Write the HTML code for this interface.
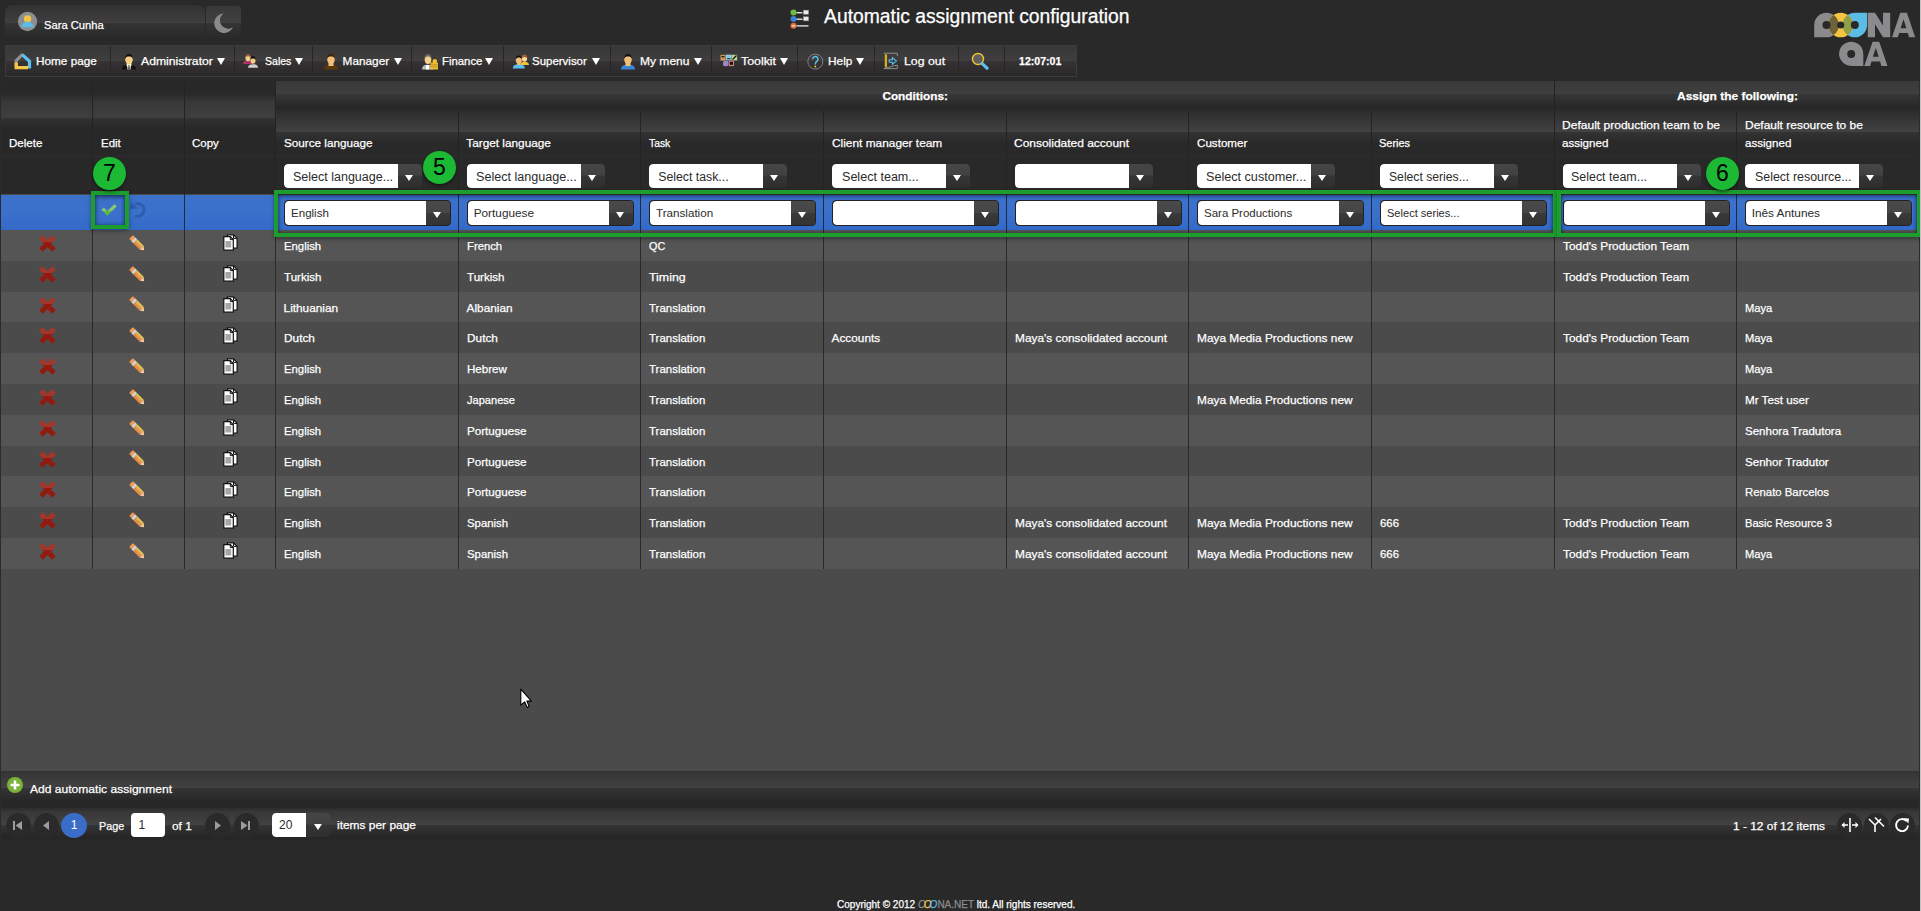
<!DOCTYPE html>
<html><head><meta charset="utf-8"><style>
*{box-sizing:border-box;margin:0;padding:0}
html,body{width:1921px;height:911px;overflow:hidden;background:#292929;font-family:"Liberation Sans",sans-serif;font-size:12px;color:#fff}
.a{position:absolute}
svg{display:block}
.t{position:absolute;white-space:nowrap;line-height:16px;height:16px;-webkit-text-stroke:0.25px currentColor}
#user{left:5px;top:5px;width:200px;height:35px;border-radius:7px;background:linear-gradient(#333232 0,#3f3d3d 17px,#403e3e 17.5px,#353434 18px,#2b2a2a 32px,#292828 35px)}
#moon{left:206px;top:6px;width:35px;height:34px;border-radius:3px;background:linear-gradient(#393838 0,#424141 17px,#343333 17.6px,#2b2a2a 32px,#292828 34px)}
#menu{left:5px;top:45px;width:1072px;height:32px;border:1px solid #3d3c3c;background:linear-gradient(#383737 0,#3f3d3d 14.5px,#353333 15px,#2d2b2b 26px,#2a2828 30px)}
.sep{position:absolute;top:46px;width:1px;height:30px;background:#272626}
.arr{position:absolute;width:0;height:0;border-left:4.5px solid transparent;border-right:4.5px solid transparent;border-top:7px solid #fff}
#grid{left:0;top:81px;width:1920px;height:761px;background:#4b4b4b;border-left:1px solid #2b2b2b;border-right:1px solid #2b2b2b}
.vl{position:absolute;width:1px;background:#2a2a2a}
.dd{position:absolute;height:24px;border-radius:4px;overflow:hidden}
.dd .w{position:absolute;left:0;top:0;bottom:0;background:#fff;border-radius:4px 0 0 4px;color:#2a2a2a;padding-left:10px;line-height:24px;font-size:12px;white-space:nowrap}
.dd .b{position:absolute;right:0;top:0;bottom:0;width:24px;background:linear-gradient(#474646 0,#424141 11px,#363535 12px,#2f2e2e 24px);border-radius:0 4px 4px 0}
.dd .b i{position:absolute;left:7.5px;top:11px;width:0;height:0;border-left:4.5px solid transparent;border-right:4.5px solid transparent;border-top:6.5px solid #fff}
.ed{position:absolute;height:26px;border:1px solid #232222;border-radius:4px;background:#343333;overflow:hidden}
.ed .w{position:absolute;left:0;top:0;bottom:0;background:#fff;border-radius:4px 0 0 4px;color:#2a2a2a;padding-left:7px;line-height:24px;font-size:12px;white-space:nowrap}
.ed .b{position:absolute;right:0;top:0;bottom:0;width:24px;background:linear-gradient(#4b4a4a 0,#464545 11.5px,#3b3a3a 12px,#343333 24px)}
.ed .b i{position:absolute;left:7.5px;top:11px;width:0;height:0;border-left:4.5px solid transparent;border-right:4.5px solid transparent;border-top:6.5px solid #fff}
.circ{position:absolute;width:33px;height:33px;border-radius:50%;background:#1bb934;color:#000;font-size:23px;text-align:center;line-height:33px;box-shadow:0 2px 3px rgba(0,0,0,.45)}
.gr{position:absolute;border:4px solid #1c9e2e;box-shadow:inset 0 2px 4px rgba(0,0,0,.45),inset 0 0 4px rgba(0,0,0,.3),0 2px 4px rgba(0,0,0,.35)}
.row{position:absolute;left:1px;width:1918px}
.cell{position:absolute;white-space:nowrap;color:#fff;font-size:12px}
.pb{position:absolute;width:25px;height:25px;border-radius:50%;background:#2b2a2a}
</style></head><body>
<div id="user" class="a"></div>
<svg class="a" style="left:17px;top:11px" width="21" height="21" viewBox="0 0 21 21"><circle cx="10.5" cy="10.5" r="9.65" fill="#8d8e91"/><circle cx="10.6" cy="7.9" r="3.65" fill="#f6c445"/><path d="M4.6 16.3c0-3.5 2.5-5.5 5.9-5.5s5.9 2 5.9 5.5z" fill="#5bbde6"/></svg>
<div id="tx1" class="t" style="left:43.70px;top:16.91px;font-size:11.800px;color:#fff;transform:scaleX(0.9487);transform-origin:0 0;">Sara Cunha</div>
<div id="moon" class="a"></div>
<svg class="a" style="left:212px;top:12px" width="22" height="22" viewBox="0 0 22 22"><path d="M11.5 1.5A9.8 9.8 0 1 0 21 15.2 8 8 0 0 1 11.5 1.5z" fill="#8a8a8d"/></svg>
<svg class="a" style="left:790px;top:9px" width="21" height="21" viewBox="0 0 21 21">
<circle cx="3.5" cy="3.5" r="3" fill="#6cbb3c"/><rect x="6.5" y="3" width="6" height="1.4" fill="#ddd"/><rect x="13.5" y="1.2" width="5" height="4" fill="#eee" stroke="#999" stroke-width=".6"/>
<circle cx="3.5" cy="10" r="3" fill="#3b7fd9"/><rect x="6.5" y="9.5" width="6" height="1.4" fill="#ddd"/><rect x="13.5" y="7.8" width="5" height="4" fill="#eee" stroke="#999" stroke-width=".6"/>
<circle cx="3.5" cy="16.8" r="3" fill="#e0703a"/><rect x="1.8" y="16.3" width="3.4" height="1" fill="#fff"/><rect x="6.5" y="16.2" width="12" height="1.4" fill="#ddd"/></svg>
<div id="tx2" class="t" style="left:824.10px;top:8.71px;font-size:19.300px;color:#fff;">Automatic assignment configuration</div>
<svg class="a" style="left:1814px;top:12px" width="104" height="56" viewBox="0 0 104 56">
<defs>
<clipPath id="cy"><circle cx="26.7" cy="13" r="12.3"/></clipPath>
</defs>
<g fill="#8b8b8e">
<path d="M12.5 0.7A12.3 12.3 0 0 1 24.8 13 12.3 12.3 0 0 1 12.5 25.3H0.2V13A12.3 12.3 0 0 1 12.5 0.7z"/>
<path d="M53.8 25.3V0.7H61L69 13.5V0.7H76.2V25.3H69L61 12.3V25.3z"/>
<path fill-rule="evenodd" d="M78 25.3L86.3 0.7H92.9L101.2 25.3H95.1L93.8 21H85.2L83.8 25.3zM86.6 16.2H92.4L89.5 7.2z"/>
<path d="M37.2 29.7A12.1 12.1 0 0 1 49.3 41.8V53.9H37.2A12.1 12.1 0 0 1 37.2 29.7z"/>
<path fill-rule="evenodd" d="M50.3 53.9L58.6 29.7H65.2L73.5 53.9H67.4L66.1 49.6H57.5L56.1 53.9zM58.9 44.8H64.7L61.8 36z"/>
</g>
<path d="M40.8 0.7H53.1V13A12.3 12.3 0 0 1 40.8 25.3 12.3 12.3 0 0 1 28.5 13 12.3 12.3 0 0 1 40.8 0.7z" fill="#5bbde6"/>
<circle cx="26.7" cy="13" r="12.3" fill="#f4c542"/>
<g clip-path="url(#cy)">
<path d="M12.5 0.7A12.3 12.3 0 0 1 24.8 13 12.3 12.3 0 0 1 12.5 25.3H0.2V13A12.3 12.3 0 0 1 12.5 0.7z" fill="#6f6238"/>
<path d="M40.8 0.7H53.1V13A12.3 12.3 0 0 1 40.8 25.3 12.3 12.3 0 0 1 28.5 13 12.3 12.3 0 0 1 40.8 0.7z" fill="#8fa049"/>
</g>
<g fill="#292929"><circle cx="12.5" cy="13" r="4"/><circle cx="26.7" cy="13" r="3.6"/><circle cx="40.8" cy="13" r="4"/><circle cx="37.2" cy="41.9" r="4"/></g>
</svg>
<div id="menu" class="a"></div>
<div class="sep" style="left:110px"></div>
<div class="sep" style="left:234px"></div>
<div class="sep" style="left:312px"></div>
<div class="sep" style="left:411px"></div>
<div class="sep" style="left:503px"></div>
<div class="sep" style="left:610px"></div>
<div class="sep" style="left:711px"></div>
<div class="sep" style="left:797px"></div>
<div class="sep" style="left:874px"></div>
<div class="sep" style="left:958px"></div>
<div class="sep" style="left:1004px"></div>
<div id="tx3" class="t" style="left:35.90px;top:52.91px;font-size:11.800px;color:#fff;">Home page</div>
<div id="tx4" class="t" style="left:140.60px;top:52.91px;font-size:11.800px;color:#fff;transform:scaleX(1.0347);transform-origin:0 0;">Administrator</div>
<div class="arr" style="left:216.7px;top:58px"></div>
<div id="tx5" class="t" style="left:264.50px;top:52.91px;font-size:11.800px;color:#fff;transform:scaleX(0.8927);transform-origin:0 0;">Sales</div>
<div class="arr" style="left:294.5px;top:58px"></div>
<div id="tx6" class="t" style="left:342.60px;top:52.91px;font-size:11.800px;color:#fff;">Manager</div>
<div class="arr" style="left:393.5px;top:58px"></div>
<div id="tx7" class="t" style="left:441.50px;top:52.91px;font-size:11.800px;color:#fff;transform:scaleX(0.9634);transform-origin:0 0;">Finance</div>
<div class="arr" style="left:485px;top:58px"></div>
<div id="tx8" class="t" style="left:532.40px;top:52.91px;font-size:11.800px;color:#fff;transform:scaleX(0.9722);transform-origin:0 0;">Supervisor</div>
<div class="arr" style="left:592px;top:58px"></div>
<div id="tx9" class="t" style="left:640.10px;top:52.91px;font-size:11.800px;color:#fff;transform:scaleX(1.0190);transform-origin:0 0;">My menu</div>
<div class="arr" style="left:694px;top:58px"></div>
<div id="tx10" class="t" style="left:741.10px;top:52.91px;font-size:11.800px;color:#fff;transform:scaleX(1.0485);transform-origin:0 0;">Toolkit</div>
<div class="arr" style="left:780px;top:58px"></div>
<div id="tx11" class="t" style="left:828.10px;top:52.91px;font-size:11.800px;color:#fff;">Help</div>
<div class="arr" style="left:856px;top:58px"></div>
<div id="tx12" class="t" style="left:903.80px;top:52.91px;font-size:11.800px;color:#fff;transform:scaleX(1.0428);transform-origin:0 0;">Log out</div>
<div id="tx13" class="t" style="left:1018.80px;top:52.91px;font-size:11.800px;color:#fff;transform:scaleX(0.8963);transform-origin:0 0;font-weight:bold;">12:07:01</div>
<svg class="a" style="left:14px;top:52px" width="18" height="18" viewBox="0 0 18 18"><path d="M2.2 15.6V8.6L8.8 2.2" fill="none" stroke="#8e9096" stroke-width="3.2"/><path d="M8.2 2.6l7.3 6.6v7.4" fill="none" stroke="#5bc3ef" stroke-width="3.2"/><path d="M2.2 10.5v5.2H14" fill="none" stroke="#f6c744" stroke-width="3.2"/></svg>
<svg class="a" style="left:121px;top:53px" width="16" height="17" viewBox="0 0 16 17"><path d="M1 16.5c0-3.6 2.8-5 7-5s7 1.4 7 5z" fill="#111"/><rect x="5.5" y="9" width="5" height="4" fill="#f4cf86"/><ellipse cx="8" cy="6.5" rx="3.8" ry="4.6" fill="#f4cf86"/><path d="M4 5.8C4 2.5 5.8 1 8 1s4 1.5 4 4.8c-.8-1.6-2-2.2-4-2.2S4.8 4.2 4 5.8z" fill="#111"/><path d="M6 11.5h4l-.5 5h-3z" fill="#fff"/><path d="M7.6 12h.8l.4 4.5h-1.6z" fill="#222"/></svg>
<svg class="a" style="left:243px;top:54px" width="18" height="14" viewBox="0 0 18 14"><path d="M0 10c0-2.6 2-3.6 5-3.6s5 1 5 3.6z" fill="#b0306a"/><ellipse cx="5" cy="4" rx="2.6" ry="3.2" fill="#f2cd86"/><path d="M2.2 4.5C2.2 1.5 3.5 0 5 0s2.8 1.5 2.8 4.5C7.2 2.8 6.2 2.2 5 2.2S2.8 2.8 2.2 4.5z" fill="#a45a36"/><path d="M5 13.8c0-2.6 2-3.6 5-3.6s5 1 5 3.6z" fill="#cfcfcf"/><ellipse cx="10" cy="6.5" rx="2.5" ry="3.3" fill="#f2cd86"/><path d="M7.5 6C7.5 3.5 8.7 2 10 2s2.5 1.5 2.5 4c-.6-1.2-1.5-1.6-2.5-1.6S8.1 4.8 7.5 6z" fill="#111"/></svg>
<svg class="a" style="left:323px;top:53px" width="16" height="17" viewBox="0 0 16 17"><path d="M1 16.5c0-3.6 2.8-5 7-5s7 1.4 7 5z" fill="#5a3a0a"/><rect x="5.5" y="9" width="5" height="4" fill="#f1bf78"/><ellipse cx="8" cy="6.5" rx="3.8" ry="4.6" fill="#f1bf78"/><path d="M4 5.8C4 2.5 5.8 1 8 1s4 1.5 4 4.8c-.8-1.6-2-2.2-4-2.2S4.8 4.2 4 5.8z" fill="#3b2508"/></svg>
<svg class="a" style="left:421px;top:53px" width="18" height="17" viewBox="0 0 18 17"><path d="M1 16.5c0-3.4 2.2-4.8 5.5-4.8s5.5 1.4 5.5 4.8z" fill="#bbb"/><path d="M5 12h3v4.5H5z" fill="#fff"/><ellipse cx="7" cy="6.5" rx="3.3" ry="4.5" fill="#f5d088"/><path d="M3.6 5.5C3.6 2.5 5 1 7 1s3.4 1.5 3.4 4.5C9.6 4 8.5 3.4 7 3.4S4.4 4 3.6 5.5z" fill="#6d6a60"/><rect x="9.5" y="9.5" width="7.5" height="7" fill="#e9bb34"/><g fill="#b98a1a"><rect x="9.5" y="11.5" width="7.5" height=".7"/><rect x="9.5" y="13.5" width="7.5" height=".7"/></g><circle cx="13.8" cy="8.2" r="2.2" fill="#f2c232"/></svg>
<svg class="a" style="left:512px;top:54px" width="18" height="15" viewBox="0 0 18 15"><path d="M8 11c0-2.4 2-3.3 4.5-3.3S17 8.6 17 11z" fill="#f2c232"/><ellipse cx="12.5" cy="4.5" rx="2.6" ry="3.3" fill="#f7d99a"/><path d="M9.6 5.5C9.6 1.8 11 .6 12.5.6s3 1.2 3 4.9c-.8-1.6-1.7-2.4-3-2.4s-2.2.8-2.9 2.4z" fill="#a45a36"/><path d="M.8 14.5c0-3 2.6-4.3 6-4.3s6 1.3 6 4.3z" fill="#5ac0ef"/><rect x="5.2" y="8" width="3.2" height="3" fill="#f2bf78"/><ellipse cx="6.8" cy="6" rx="3" ry="3.8" fill="#f2bf78"/><path d="M3.8 5.2C3.8 2.6 5.2 1.6 6.8 1.6s3 1 3 3.6C9 4 8 3.5 6.8 3.5S4.6 4 3.8 5.2z" fill="#111"/></svg>
<svg class="a" style="left:620px;top:53px" width="16" height="17" viewBox="0 0 16 17"><path d="M1 16.5c0-3.6 2.8-5 7-5s7 1.4 7 5z" fill="#3a86d4"/><rect x="5.5" y="9" width="5" height="4" fill="#f2bf78"/><ellipse cx="8" cy="6.5" rx="3.8" ry="4.6" fill="#f2bf78"/><path d="M4 5.8C4 2.5 5.8 1 8 1s4 1.5 4 4.8c-.8-1.6-2-2.2-4-2.2S4.8 4.2 4 5.8z" fill="#111"/></svg>
<svg class="a" style="left:720px;top:54px" width="18" height="13" viewBox="0 0 18 13"><rect x=".5" y=".8" width="5.2" height="5.8" fill="#c99a5e"/><rect x="6" y=".6" width="5.4" height="5.8" fill="#8cc9e2"/><rect x="11.5" y=".8" width="5.6" height="5.6" fill="#bfd88e"/><path d="M12.5 5.5l4-4" stroke="#111" stroke-width="1.2"/><rect x="3" y="6.8" width="5.5" height="5.5" rx="2" fill="#9a88c8"/><rect x="8.8" y="6.8" width="5.2" height="5.3" fill="#d88080"/><rect x="9.8" y="7.8" width="3.2" height="3" fill="#111"/><rect x="1.5" y="2" width="3" height="1.4" fill="#222"/><rect x="7" y="4.2" width="3.5" height="1" fill="#222"/></svg>
<svg class="a" style="left:807px;top:53px" width="18" height="18" viewBox="0 0 18 18"><circle cx="8.3" cy="8.6" r="7.5" fill="none" stroke="#8a8a8a" stroke-width=".9"/><path d="M5.6 6.2a2.7 2.7 0 1 1 4.2 2.2c-1.2.8-1.5 1.4-1.5 3" fill="none" stroke="#5ac0ef" stroke-width="1.5"/><circle cx="8.3" cy="13.6" r="1" fill="#f2c232"/></svg>
<svg class="a" style="left:883px;top:52px" width="18" height="18" viewBox="0 0 18 18"><path d="M.8 1.2h13.5V4M14.3 13v3.6H.8z" fill="none" stroke="#999" stroke-width=".9"/><rect x="1.8" y="2" width="2.2" height="13.6" rx="1" fill="#e8b630" stroke="#8a6a10" stroke-width=".4"/><path d="M6.2 7.8h3.2V5.6l4 3.4-4 3.4V10.2H6.2z" fill="none" stroke="#5ac0ef" stroke-width="1.1"/></svg>
<svg class="a" style="left:971px;top:52px" width="19" height="18" viewBox="0 0 19 18"><circle cx="7" cy="7" r="5.5" fill="#5f5f5f" stroke="#f2c232" stroke-width="1.4"/><path d="M11.2 11.6l4.8 4.6" stroke="#5ac0ef" stroke-width="3.2" stroke-linecap="round"/></svg>
<div id="grid" class="a"></div>
<div class="a" style="left:1px;top:81px;width:274px;height:113px;background:linear-gradient(#292828 0,#2a2929 13px,#393838 21px,#403f3f 36.5px,#333232 37px,#292828 48px,#292828 113px)"></div>
<div class="a" style="left:275px;top:81px;width:1644px;height:28px;background:linear-gradient(#3a3939 0,#403f3f 13px,#373636 13.5px,#282727 26.5px,#2b2a29 28px)"></div>
<div class="a" style="left:275px;top:109px;width:1644px;height:85px;background:linear-gradient(#2b2a2a 0,#434242 23px,#343333 23.5px,#2a2929 34px,#2a2929 85px)"></div>
<div class="a" style="left:1px;top:156px;width:1918px;height:1px;background:#2e2d2d"></div>
<div class="vl" style="left:92px;top:81px;height:113px;background:#242323"></div>
<div class="vl" style="left:184px;top:81px;height:113px;background:#242323"></div>
<div class="vl" style="left:275px;top:81px;height:113px;background:#242323"></div>
<div class="vl" style="left:458px;top:110px;height:84px;background:#242323"></div>
<div class="vl" style="left:640px;top:110px;height:84px;background:#242323"></div>
<div class="vl" style="left:823px;top:110px;height:84px;background:#242323"></div>
<div class="vl" style="left:1006px;top:110px;height:84px;background:#242323"></div>
<div class="vl" style="left:1188px;top:110px;height:84px;background:#242323"></div>
<div class="vl" style="left:1371px;top:110px;height:84px;background:#242323"></div>
<div class="vl" style="left:1554px;top:81px;height:113px;background:#242323"></div>
<div class="vl" style="left:1736px;top:110px;height:84px;background:#242323"></div>
<div id="tx14" class="t" style="left:882.40px;top:87.51px;font-size:11.800px;color:#fff;font-weight:bold;">Conditions:</div>
<div id="tx15" class="t" style="left:1677.00px;top:87.51px;font-size:11.800px;color:#fff;transform:scaleX(1.0140);transform-origin:0 0;font-weight:bold;">Assign the following:</div>
<div id="tx16" class="t" style="left:8.84px;top:134.91px;font-size:11.800px;color:#fff;transform:scaleX(0.9787);transform-origin:0 0;">Delete</div>
<div id="tx17" class="t" style="left:100.70px;top:134.91px;font-size:11.800px;color:#fff;transform:scaleX(0.9699);transform-origin:0 0;">Edit</div>
<div id="tx18" class="t" style="left:191.85px;top:134.91px;font-size:11.800px;color:#fff;transform:scaleX(0.9739);transform-origin:0 0;">Copy</div>
<div id="tx19" class="t" style="left:283.50px;top:134.91px;font-size:11.800px;color:#fff;transform:scaleX(0.9913);transform-origin:0 0;">Source language</div>
<div id="tx20" class="t" style="left:466.30px;top:134.91px;font-size:11.800px;color:#fff;">Target language</div>
<div id="tx21" class="t" style="left:649.00px;top:134.91px;font-size:11.800px;color:#fff;transform:scaleX(0.8741);transform-origin:0 0;">Task</div>
<div id="tx22" class="t" style="left:831.60px;top:134.91px;font-size:11.800px;color:#fff;transform:scaleX(1.0068);transform-origin:0 0;">Client manager team</div>
<div id="tx23" class="t" style="left:1013.60px;top:134.91px;font-size:11.800px;color:#fff;transform:scaleX(1.0142);transform-origin:0 0;">Consolidated account</div>
<div id="tx24" class="t" style="left:1196.90px;top:134.91px;font-size:11.800px;color:#fff;transform:scaleX(0.9846);transform-origin:0 0;">Customer</div>
<div id="tx25" class="t" style="left:1379.00px;top:134.91px;font-size:11.800px;color:#fff;transform:scaleX(0.9297);transform-origin:0 0;">Series</div>
<div id="tx26" class="t" style="left:1562.40px;top:116.51px;font-size:11.800px;color:#fff;transform:scaleX(1.0211);transform-origin:0 0;">Default production team to be</div>
<div id="tx27" class="t" style="left:1562.40px;top:134.51px;font-size:11.800px;color:#fff;transform:scaleX(0.9830);transform-origin:0 0;">assigned</div>
<div id="tx28" class="t" style="left:1745.00px;top:116.81px;font-size:11.800px;color:#fff;transform:scaleX(1.0148);transform-origin:0 0;">Default resource to be</div>
<div id="tx29" class="t" style="left:1745.00px;top:134.71px;font-size:11.800px;color:#fff;transform:scaleX(0.9830);transform-origin:0 0;">assigned</div>
<div class="dd" style="left:283.7px;top:164px;width:138px"><div class="w" style="width:114px"></div><div class="b"><i></i></div></div>
<div id="tx30" class="t" style="left:293.20px;top:168.84px;font-size:12.300px;color:#2b2b2b;-webkit-text-stroke:0;transform:scaleX(1.0165);transform-origin:0 0;">Select language...</div>
<div class="dd" style="left:466.7px;top:164px;width:138px"><div class="w" style="width:114px"></div><div class="b"><i></i></div></div>
<div id="tx31" class="t" style="left:475.50px;top:168.84px;font-size:12.300px;color:#2b2b2b;-webkit-text-stroke:0;transform:scaleX(1.0243);transform-origin:0 0;">Select language...</div>
<div class="dd" style="left:648.7px;top:164px;width:138px"><div class="w" style="width:114px"></div><div class="b"><i></i></div></div>
<div id="tx32" class="t" style="left:658.20px;top:168.84px;font-size:12.300px;color:#2b2b2b;-webkit-text-stroke:0;">Select task...</div>
<div class="dd" style="left:831.7px;top:164px;width:138px"><div class="w" style="width:114px"></div><div class="b"><i></i></div></div>
<div id="tx33" class="t" style="left:841.60px;top:168.84px;font-size:12.300px;color:#2b2b2b;-webkit-text-stroke:0;transform:scaleX(1.0217);transform-origin:0 0;">Select team...</div>
<div class="dd" style="left:1014.7px;top:164px;width:138px"><div class="w" style="width:114px"></div><div class="b"><i></i></div></div>
<div class="dd" style="left:1196.7px;top:164px;width:138px"><div class="w" style="width:114px"></div><div class="b"><i></i></div></div>
<div id="tx34" class="t" style="left:1206.30px;top:168.84px;font-size:12.300px;color:#2b2b2b;-webkit-text-stroke:0;transform:scaleX(1.0259);transform-origin:0 0;">Select customer...</div>
<div class="dd" style="left:1379.7px;top:164px;width:138px"><div class="w" style="width:114px"></div><div class="b"><i></i></div></div>
<div id="tx35" class="t" style="left:1389.40px;top:168.84px;font-size:12.300px;color:#2b2b2b;-webkit-text-stroke:0;transform:scaleX(0.9899);transform-origin:0 0;">Select series...</div>
<div class="dd" style="left:1562.7px;top:164px;width:138px"><div class="w" style="width:114px"></div><div class="b"><i></i></div></div>
<div id="tx36" class="t" style="left:1571.40px;top:168.84px;font-size:12.300px;color:#2b2b2b;-webkit-text-stroke:0;transform:scaleX(1.0117);transform-origin:0 0;">Select team...</div>
<div class="dd" style="left:1744.7px;top:164px;width:138px"><div class="w" style="width:114px"></div><div class="b"><i></i></div></div>
<div id="tx37" class="t" style="left:1754.60px;top:168.84px;font-size:12.300px;color:#2b2b2b;-webkit-text-stroke:0;transform:scaleX(1.0085);transform-origin:0 0;">Select resource...</div>
<div class="a" style="left:1px;top:194.6px;width:1918px;height:35.4px;background:linear-gradient(#3b70cb 0,#3b70cb 17px,#3369c8 35.4px)"></div>
<div class="a" style="left:275px;top:230px;width:1644px;height:3px;background:#555"></div>
<div class="vl" style="left:92px;top:194px;height:36px;background:#1d2a40"></div>
<div class="vl" style="left:184px;top:194px;height:36px;background:#1d2a40"></div>
<div class="vl" style="left:275px;top:194px;height:36px;background:#1d2a40"></div>
<div class="vl" style="left:458px;top:194px;height:36px;background:#1d2a40"></div>
<div class="vl" style="left:640px;top:194px;height:36px;background:#1d2a40"></div>
<div class="vl" style="left:823px;top:194px;height:36px;background:#1d2a40"></div>
<div class="vl" style="left:1006px;top:194px;height:36px;background:#1d2a40"></div>
<div class="vl" style="left:1188px;top:194px;height:36px;background:#1d2a40"></div>
<div class="vl" style="left:1371px;top:194px;height:36px;background:#1d2a40"></div>
<div class="vl" style="left:1554px;top:194px;height:36px;background:#1d2a40"></div>
<div class="vl" style="left:1736px;top:194px;height:36px;background:#1d2a40"></div>
<div class="ed" style="left:283.5px;top:200px;width:167.2px"><div class="w" style="width:141px"></div><div class="b"><i></i></div></div>
<div id="tx38" class="t" style="left:290.70px;top:204.91px;font-size:11.800px;color:#2b2b2b;-webkit-text-stroke:0;transform:scaleX(0.9792);transform-origin:0 0;">English</div>
<div class="ed" style="left:466.5px;top:200px;width:167.2px"><div class="w" style="width:141px"></div><div class="b"><i></i></div></div>
<div id="tx39" class="t" style="left:473.70px;top:204.91px;font-size:11.800px;color:#2b2b2b;-webkit-text-stroke:0;">Portuguese</div>
<div class="ed" style="left:648.5px;top:200px;width:167.2px"><div class="w" style="width:141px"></div><div class="b"><i></i></div></div>
<div id="tx40" class="t" style="left:656.40px;top:204.91px;font-size:11.800px;color:#2b2b2b;-webkit-text-stroke:0;transform:scaleX(0.9868);transform-origin:0 0;">Translation</div>
<div class="ed" style="left:831.5px;top:200px;width:167.2px"><div class="w" style="width:141px"></div><div class="b"><i></i></div></div>
<div class="ed" style="left:1014.5px;top:200px;width:167.2px"><div class="w" style="width:141px"></div><div class="b"><i></i></div></div>
<div class="ed" style="left:1196.5px;top:200px;width:167.2px"><div class="w" style="width:141px"></div><div class="b"><i></i></div></div>
<div id="tx41" class="t" style="left:1204.40px;top:204.91px;font-size:11.800px;color:#2b2b2b;-webkit-text-stroke:0;transform:scaleX(0.9739);transform-origin:0 0;">Sara Productions</div>
<div class="ed" style="left:1379.5px;top:200px;width:167.2px"><div class="w" style="width:141px"></div><div class="b"><i></i></div></div>
<div id="tx42" class="t" style="left:1387.40px;top:204.91px;font-size:11.800px;color:#2b2b2b;-webkit-text-stroke:0;transform:scaleX(0.9372);transform-origin:0 0;">Select series...</div>
<div class="ed" style="left:1562.5px;top:200px;width:167.2px"><div class="w" style="width:141px"></div><div class="b"><i></i></div></div>
<div class="ed" style="left:1744.5px;top:200px;width:167.2px"><div class="w" style="width:141px"></div><div class="b"><i></i></div></div>
<div id="tx43" class="t" style="left:1751.70px;top:204.91px;font-size:11.800px;color:#2b2b2b;-webkit-text-stroke:0;">Inês Antunes</div>
<svg class="a" style="left:99px;top:201px" width="20" height="16" viewBox="0 0 20 16"><defs><linearGradient id="cg" x1="0" y1="0" x2="0" y2="16" gradientUnits="userSpaceOnUse"><stop offset=".62" stop-color="#86c872"/><stop offset=".63" stop-color="#5db83e"/></linearGradient></defs><path d="M3.6 7.6L8.3 12.4 16.6 4.1" fill="none" stroke="url(#cg)" stroke-width="3.4"/></svg>
<svg class="a" style="left:129px;top:200px" width="20" height="20" viewBox="0 0 20 20"><path d="M6.07 4.2A6.35 6.35 0 1 1 6.07 15.7" fill="none" stroke="#2e5cae" stroke-width="2.7"/><path d="M2.1 1.9L1 9.5 8.6 8.2z" fill="#2e5cae"/></svg>
<div class="a" style="left:1px;top:230.0px;width:1918px;height:30.8px;background:#555555"></div>
<div class="a" style="left:38.6px;top:234.9px"><svg width="17" height="17" viewBox="0 0 17 17"><defs><linearGradient id="xg" x1="0" y1="0" x2="0" y2="1"><stop offset=".35" stop-color="#a3352b"/><stop offset=".36" stop-color="#911b10"/></linearGradient></defs><path d="M2 2l13 13M15 2L2 15" stroke="url(#xg)" stroke-width="5.2"/></svg></div>
<div class="a" style="left:129.2px;top:234.8px"><svg width="17" height="17" viewBox="0 0 17 17" style="overflow:visible"><g transform="rotate(45 8.5 8.5)"><rect x="-0.7" y="5.8" width="3.4" height="5.4" rx="1" fill="#f39a52"/><rect x="2.5" y="5.8" width="2.8" height="5.4" fill="#d4d4d4"/><rect x="5.3" y="5.8" width="9.2" height="1.9" fill="#e9c64c"/><rect x="5.3" y="7.7" width="9.2" height="1.7" fill="#f2ac62"/><rect x="5.3" y="9.4" width="9.2" height="1.8" fill="#f28a3c"/><path d="M14.5 5.8L17.9 8.5 14.5 11.2z" fill="#f4c9a2"/></g></svg></div>
<div class="a" style="left:222.5px;top:234.3px"><svg width="15" height="17" viewBox="0 0 15 17"><path d="M4.5.8h6l3.6 3.6v9.6H4.5z" fill="#fff" stroke="#111" stroke-width="1.2"/><path d="M.8 2.6h6.5l3 3v10.6H.8z" fill="#fff" stroke="#111" stroke-width="1.2"/><rect x="2.4" y="7" width="5.8" height="6.5" fill="#a6a6a6"/><path d="M7.3 2.6v3h3" fill="none" stroke="#111" stroke-width="1"/><path d="M10.5.8v3.6h3.6" fill="none" stroke="#111" stroke-width="1"/></svg></div>
<div id="tx44" class="t" style="left:283.60px;top:238.01px;font-size:11.800px;color:#fff;transform:scaleX(0.9592);transform-origin:0 0;">English</div>
<div id="tx45" class="t" style="left:466.60px;top:238.01px;font-size:11.800px;color:#fff;transform:scaleX(0.9572);transform-origin:0 0;">French</div>
<div id="tx46" class="t" style="left:648.60px;top:238.01px;font-size:11.800px;color:#fff;transform:scaleX(0.9133);transform-origin:0 0;">QC</div>
<div id="tx47" class="t" style="left:1562.60px;top:238.01px;font-size:11.800px;color:#fff;transform:scaleX(1.0064);transform-origin:0 0;">Todd's Production Team</div>
<div class="a" style="left:1px;top:260.8px;width:1918px;height:30.8px;background:#4b4b4b"></div>
<div class="a" style="left:38.6px;top:265.7px"><svg width="17" height="17" viewBox="0 0 17 17"><defs><linearGradient id="xg" x1="0" y1="0" x2="0" y2="1"><stop offset=".35" stop-color="#a3352b"/><stop offset=".36" stop-color="#911b10"/></linearGradient></defs><path d="M2 2l13 13M15 2L2 15" stroke="url(#xg)" stroke-width="5.2"/></svg></div>
<div class="a" style="left:129.2px;top:265.6px"><svg width="17" height="17" viewBox="0 0 17 17" style="overflow:visible"><g transform="rotate(45 8.5 8.5)"><rect x="-0.7" y="5.8" width="3.4" height="5.4" rx="1" fill="#f39a52"/><rect x="2.5" y="5.8" width="2.8" height="5.4" fill="#d4d4d4"/><rect x="5.3" y="5.8" width="9.2" height="1.9" fill="#e9c64c"/><rect x="5.3" y="7.7" width="9.2" height="1.7" fill="#f2ac62"/><rect x="5.3" y="9.4" width="9.2" height="1.8" fill="#f28a3c"/><path d="M14.5 5.8L17.9 8.5 14.5 11.2z" fill="#f4c9a2"/></g></svg></div>
<div class="a" style="left:222.5px;top:265.1px"><svg width="15" height="17" viewBox="0 0 15 17"><path d="M4.5.8h6l3.6 3.6v9.6H4.5z" fill="#fff" stroke="#111" stroke-width="1.2"/><path d="M.8 2.6h6.5l3 3v10.6H.8z" fill="#fff" stroke="#111" stroke-width="1.2"/><rect x="2.4" y="7" width="5.8" height="6.5" fill="#a6a6a6"/><path d="M7.3 2.6v3h3" fill="none" stroke="#111" stroke-width="1"/><path d="M10.5.8v3.6h3.6" fill="none" stroke="#111" stroke-width="1"/></svg></div>
<div id="tx48" class="t" style="left:283.60px;top:268.81px;font-size:11.800px;color:#fff;transform:scaleX(0.9798);transform-origin:0 0;">Turkish</div>
<div id="tx49" class="t" style="left:466.60px;top:268.81px;font-size:11.800px;color:#fff;transform:scaleX(0.9798);transform-origin:0 0;">Turkish</div>
<div id="tx50" class="t" style="left:648.60px;top:268.81px;font-size:11.800px;color:#fff;transform:scaleX(1.0489);transform-origin:0 0;">Timing</div>
<div id="tx51" class="t" style="left:1562.60px;top:268.81px;font-size:11.800px;color:#fff;transform:scaleX(1.0064);transform-origin:0 0;">Todd's Production Team</div>
<div class="a" style="left:1px;top:291.6px;width:1918px;height:30.8px;background:#555555"></div>
<div class="a" style="left:38.6px;top:296.5px"><svg width="17" height="17" viewBox="0 0 17 17"><defs><linearGradient id="xg" x1="0" y1="0" x2="0" y2="1"><stop offset=".35" stop-color="#a3352b"/><stop offset=".36" stop-color="#911b10"/></linearGradient></defs><path d="M2 2l13 13M15 2L2 15" stroke="url(#xg)" stroke-width="5.2"/></svg></div>
<div class="a" style="left:129.2px;top:296.4px"><svg width="17" height="17" viewBox="0 0 17 17" style="overflow:visible"><g transform="rotate(45 8.5 8.5)"><rect x="-0.7" y="5.8" width="3.4" height="5.4" rx="1" fill="#f39a52"/><rect x="2.5" y="5.8" width="2.8" height="5.4" fill="#d4d4d4"/><rect x="5.3" y="5.8" width="9.2" height="1.9" fill="#e9c64c"/><rect x="5.3" y="7.7" width="9.2" height="1.7" fill="#f2ac62"/><rect x="5.3" y="9.4" width="9.2" height="1.8" fill="#f28a3c"/><path d="M14.5 5.8L17.9 8.5 14.5 11.2z" fill="#f4c9a2"/></g></svg></div>
<div class="a" style="left:222.5px;top:295.9px"><svg width="15" height="17" viewBox="0 0 15 17"><path d="M4.5.8h6l3.6 3.6v9.6H4.5z" fill="#fff" stroke="#111" stroke-width="1.2"/><path d="M.8 2.6h6.5l3 3v10.6H.8z" fill="#fff" stroke="#111" stroke-width="1.2"/><rect x="2.4" y="7" width="5.8" height="6.5" fill="#a6a6a6"/><path d="M7.3 2.6v3h3" fill="none" stroke="#111" stroke-width="1"/><path d="M10.5.8v3.6h3.6" fill="none" stroke="#111" stroke-width="1"/></svg></div>
<div id="tx52" class="t" style="left:283.60px;top:299.61px;font-size:11.800px;color:#fff;">Lithuanian</div>
<div id="tx53" class="t" style="left:466.60px;top:299.61px;font-size:11.800px;color:#fff;">Albanian</div>
<div id="tx54" class="t" style="left:648.60px;top:299.61px;font-size:11.800px;color:#fff;transform:scaleX(0.9729);transform-origin:0 0;">Translation</div>
<div id="tx55" class="t" style="left:1744.60px;top:299.61px;font-size:11.800px;color:#fff;transform:scaleX(0.9478);transform-origin:0 0;">Maya</div>
<div class="a" style="left:1px;top:322.4px;width:1918px;height:30.8px;background:#4b4b4b"></div>
<div class="a" style="left:38.6px;top:327.3px"><svg width="17" height="17" viewBox="0 0 17 17"><defs><linearGradient id="xg" x1="0" y1="0" x2="0" y2="1"><stop offset=".35" stop-color="#a3352b"/><stop offset=".36" stop-color="#911b10"/></linearGradient></defs><path d="M2 2l13 13M15 2L2 15" stroke="url(#xg)" stroke-width="5.2"/></svg></div>
<div class="a" style="left:129.2px;top:327.2px"><svg width="17" height="17" viewBox="0 0 17 17" style="overflow:visible"><g transform="rotate(45 8.5 8.5)"><rect x="-0.7" y="5.8" width="3.4" height="5.4" rx="1" fill="#f39a52"/><rect x="2.5" y="5.8" width="2.8" height="5.4" fill="#d4d4d4"/><rect x="5.3" y="5.8" width="9.2" height="1.9" fill="#e9c64c"/><rect x="5.3" y="7.7" width="9.2" height="1.7" fill="#f2ac62"/><rect x="5.3" y="9.4" width="9.2" height="1.8" fill="#f28a3c"/><path d="M14.5 5.8L17.9 8.5 14.5 11.2z" fill="#f4c9a2"/></g></svg></div>
<div class="a" style="left:222.5px;top:326.7px"><svg width="15" height="17" viewBox="0 0 15 17"><path d="M4.5.8h6l3.6 3.6v9.6H4.5z" fill="#fff" stroke="#111" stroke-width="1.2"/><path d="M.8 2.6h6.5l3 3v10.6H.8z" fill="#fff" stroke="#111" stroke-width="1.2"/><rect x="2.4" y="7" width="5.8" height="6.5" fill="#a6a6a6"/><path d="M7.3 2.6v3h3" fill="none" stroke="#111" stroke-width="1"/><path d="M10.5.8v3.6h3.6" fill="none" stroke="#111" stroke-width="1"/></svg></div>
<div id="tx56" class="t" style="left:283.60px;top:330.41px;font-size:11.800px;color:#fff;transform:scaleX(1.0031);transform-origin:0 0;">Dutch</div>
<div id="tx57" class="t" style="left:466.60px;top:330.41px;font-size:11.800px;color:#fff;transform:scaleX(1.0031);transform-origin:0 0;">Dutch</div>
<div id="tx58" class="t" style="left:648.60px;top:330.41px;font-size:11.800px;color:#fff;transform:scaleX(0.9729);transform-origin:0 0;">Translation</div>
<div id="tx59" class="t" style="left:831.60px;top:330.41px;font-size:11.800px;color:#fff;">Accounts</div>
<div id="tx60" class="t" style="left:1014.60px;top:330.41px;font-size:11.800px;color:#fff;transform:scaleX(1.0054);transform-origin:0 0;">Maya's consolidated account</div>
<div id="tx61" class="t" style="left:1196.60px;top:330.41px;font-size:11.800px;color:#fff;transform:scaleX(1.0053);transform-origin:0 0;">Maya Media Productions new</div>
<div id="tx62" class="t" style="left:1562.60px;top:330.41px;font-size:11.800px;color:#fff;transform:scaleX(1.0064);transform-origin:0 0;">Todd's Production Team</div>
<div id="tx63" class="t" style="left:1744.60px;top:330.41px;font-size:11.800px;color:#fff;transform:scaleX(0.9478);transform-origin:0 0;">Maya</div>
<div class="a" style="left:1px;top:353.2px;width:1918px;height:30.8px;background:#555555"></div>
<div class="a" style="left:38.6px;top:358.1px"><svg width="17" height="17" viewBox="0 0 17 17"><defs><linearGradient id="xg" x1="0" y1="0" x2="0" y2="1"><stop offset=".35" stop-color="#a3352b"/><stop offset=".36" stop-color="#911b10"/></linearGradient></defs><path d="M2 2l13 13M15 2L2 15" stroke="url(#xg)" stroke-width="5.2"/></svg></div>
<div class="a" style="left:129.2px;top:358.0px"><svg width="17" height="17" viewBox="0 0 17 17" style="overflow:visible"><g transform="rotate(45 8.5 8.5)"><rect x="-0.7" y="5.8" width="3.4" height="5.4" rx="1" fill="#f39a52"/><rect x="2.5" y="5.8" width="2.8" height="5.4" fill="#d4d4d4"/><rect x="5.3" y="5.8" width="9.2" height="1.9" fill="#e9c64c"/><rect x="5.3" y="7.7" width="9.2" height="1.7" fill="#f2ac62"/><rect x="5.3" y="9.4" width="9.2" height="1.8" fill="#f28a3c"/><path d="M14.5 5.8L17.9 8.5 14.5 11.2z" fill="#f4c9a2"/></g></svg></div>
<div class="a" style="left:222.5px;top:357.5px"><svg width="15" height="17" viewBox="0 0 15 17"><path d="M4.5.8h6l3.6 3.6v9.6H4.5z" fill="#fff" stroke="#111" stroke-width="1.2"/><path d="M.8 2.6h6.5l3 3v10.6H.8z" fill="#fff" stroke="#111" stroke-width="1.2"/><rect x="2.4" y="7" width="5.8" height="6.5" fill="#a6a6a6"/><path d="M7.3 2.6v3h3" fill="none" stroke="#111" stroke-width="1"/><path d="M10.5.8v3.6h3.6" fill="none" stroke="#111" stroke-width="1"/></svg></div>
<div id="tx64" class="t" style="left:283.60px;top:361.21px;font-size:11.800px;color:#fff;transform:scaleX(0.9592);transform-origin:0 0;">English</div>
<div id="tx65" class="t" style="left:466.60px;top:361.21px;font-size:11.800px;color:#fff;transform:scaleX(0.9822);transform-origin:0 0;">Hebrew</div>
<div id="tx66" class="t" style="left:648.60px;top:361.21px;font-size:11.800px;color:#fff;transform:scaleX(0.9729);transform-origin:0 0;">Translation</div>
<div id="tx67" class="t" style="left:1744.60px;top:361.21px;font-size:11.800px;color:#fff;transform:scaleX(0.9478);transform-origin:0 0;">Maya</div>
<div class="a" style="left:1px;top:384.0px;width:1918px;height:30.8px;background:#4b4b4b"></div>
<div class="a" style="left:38.6px;top:388.9px"><svg width="17" height="17" viewBox="0 0 17 17"><defs><linearGradient id="xg" x1="0" y1="0" x2="0" y2="1"><stop offset=".35" stop-color="#a3352b"/><stop offset=".36" stop-color="#911b10"/></linearGradient></defs><path d="M2 2l13 13M15 2L2 15" stroke="url(#xg)" stroke-width="5.2"/></svg></div>
<div class="a" style="left:129.2px;top:388.8px"><svg width="17" height="17" viewBox="0 0 17 17" style="overflow:visible"><g transform="rotate(45 8.5 8.5)"><rect x="-0.7" y="5.8" width="3.4" height="5.4" rx="1" fill="#f39a52"/><rect x="2.5" y="5.8" width="2.8" height="5.4" fill="#d4d4d4"/><rect x="5.3" y="5.8" width="9.2" height="1.9" fill="#e9c64c"/><rect x="5.3" y="7.7" width="9.2" height="1.7" fill="#f2ac62"/><rect x="5.3" y="9.4" width="9.2" height="1.8" fill="#f28a3c"/><path d="M14.5 5.8L17.9 8.5 14.5 11.2z" fill="#f4c9a2"/></g></svg></div>
<div class="a" style="left:222.5px;top:388.3px"><svg width="15" height="17" viewBox="0 0 15 17"><path d="M4.5.8h6l3.6 3.6v9.6H4.5z" fill="#fff" stroke="#111" stroke-width="1.2"/><path d="M.8 2.6h6.5l3 3v10.6H.8z" fill="#fff" stroke="#111" stroke-width="1.2"/><rect x="2.4" y="7" width="5.8" height="6.5" fill="#a6a6a6"/><path d="M7.3 2.6v3h3" fill="none" stroke="#111" stroke-width="1"/><path d="M10.5.8v3.6h3.6" fill="none" stroke="#111" stroke-width="1"/></svg></div>
<div id="tx68" class="t" style="left:283.60px;top:392.01px;font-size:11.800px;color:#fff;transform:scaleX(0.9592);transform-origin:0 0;">English</div>
<div id="tx69" class="t" style="left:466.60px;top:392.01px;font-size:11.800px;color:#fff;transform:scaleX(0.9377);transform-origin:0 0;">Japanese</div>
<div id="tx70" class="t" style="left:648.60px;top:392.01px;font-size:11.800px;color:#fff;transform:scaleX(0.9729);transform-origin:0 0;">Translation</div>
<div id="tx71" class="t" style="left:1196.60px;top:392.01px;font-size:11.800px;color:#fff;transform:scaleX(1.0053);transform-origin:0 0;">Maya Media Productions new</div>
<div id="tx72" class="t" style="left:1744.60px;top:392.01px;font-size:11.800px;color:#fff;transform:scaleX(0.9878);transform-origin:0 0;">Mr Test user</div>
<div class="a" style="left:1px;top:414.8px;width:1918px;height:30.8px;background:#555555"></div>
<div class="a" style="left:38.6px;top:419.7px"><svg width="17" height="17" viewBox="0 0 17 17"><defs><linearGradient id="xg" x1="0" y1="0" x2="0" y2="1"><stop offset=".35" stop-color="#a3352b"/><stop offset=".36" stop-color="#911b10"/></linearGradient></defs><path d="M2 2l13 13M15 2L2 15" stroke="url(#xg)" stroke-width="5.2"/></svg></div>
<div class="a" style="left:129.2px;top:419.6px"><svg width="17" height="17" viewBox="0 0 17 17" style="overflow:visible"><g transform="rotate(45 8.5 8.5)"><rect x="-0.7" y="5.8" width="3.4" height="5.4" rx="1" fill="#f39a52"/><rect x="2.5" y="5.8" width="2.8" height="5.4" fill="#d4d4d4"/><rect x="5.3" y="5.8" width="9.2" height="1.9" fill="#e9c64c"/><rect x="5.3" y="7.7" width="9.2" height="1.7" fill="#f2ac62"/><rect x="5.3" y="9.4" width="9.2" height="1.8" fill="#f28a3c"/><path d="M14.5 5.8L17.9 8.5 14.5 11.2z" fill="#f4c9a2"/></g></svg></div>
<div class="a" style="left:222.5px;top:419.1px"><svg width="15" height="17" viewBox="0 0 15 17"><path d="M4.5.8h6l3.6 3.6v9.6H4.5z" fill="#fff" stroke="#111" stroke-width="1.2"/><path d="M.8 2.6h6.5l3 3v10.6H.8z" fill="#fff" stroke="#111" stroke-width="1.2"/><rect x="2.4" y="7" width="5.8" height="6.5" fill="#a6a6a6"/><path d="M7.3 2.6v3h3" fill="none" stroke="#111" stroke-width="1"/><path d="M10.5.8v3.6h3.6" fill="none" stroke="#111" stroke-width="1"/></svg></div>
<div id="tx73" class="t" style="left:283.60px;top:422.81px;font-size:11.800px;color:#fff;transform:scaleX(0.9592);transform-origin:0 0;">English</div>
<div id="tx74" class="t" style="left:466.60px;top:422.81px;font-size:11.800px;color:#fff;transform:scaleX(0.9871);transform-origin:0 0;">Portuguese</div>
<div id="tx75" class="t" style="left:648.60px;top:422.81px;font-size:11.800px;color:#fff;transform:scaleX(0.9729);transform-origin:0 0;">Translation</div>
<div id="tx76" class="t" style="left:1744.60px;top:422.81px;font-size:11.800px;color:#fff;transform:scaleX(0.9763);transform-origin:0 0;">Senhora Tradutora</div>
<div class="a" style="left:1px;top:445.6px;width:1918px;height:30.8px;background:#4b4b4b"></div>
<div class="a" style="left:38.6px;top:450.5px"><svg width="17" height="17" viewBox="0 0 17 17"><defs><linearGradient id="xg" x1="0" y1="0" x2="0" y2="1"><stop offset=".35" stop-color="#a3352b"/><stop offset=".36" stop-color="#911b10"/></linearGradient></defs><path d="M2 2l13 13M15 2L2 15" stroke="url(#xg)" stroke-width="5.2"/></svg></div>
<div class="a" style="left:129.2px;top:450.4px"><svg width="17" height="17" viewBox="0 0 17 17" style="overflow:visible"><g transform="rotate(45 8.5 8.5)"><rect x="-0.7" y="5.8" width="3.4" height="5.4" rx="1" fill="#f39a52"/><rect x="2.5" y="5.8" width="2.8" height="5.4" fill="#d4d4d4"/><rect x="5.3" y="5.8" width="9.2" height="1.9" fill="#e9c64c"/><rect x="5.3" y="7.7" width="9.2" height="1.7" fill="#f2ac62"/><rect x="5.3" y="9.4" width="9.2" height="1.8" fill="#f28a3c"/><path d="M14.5 5.8L17.9 8.5 14.5 11.2z" fill="#f4c9a2"/></g></svg></div>
<div class="a" style="left:222.5px;top:449.9px"><svg width="15" height="17" viewBox="0 0 15 17"><path d="M4.5.8h6l3.6 3.6v9.6H4.5z" fill="#fff" stroke="#111" stroke-width="1.2"/><path d="M.8 2.6h6.5l3 3v10.6H.8z" fill="#fff" stroke="#111" stroke-width="1.2"/><rect x="2.4" y="7" width="5.8" height="6.5" fill="#a6a6a6"/><path d="M7.3 2.6v3h3" fill="none" stroke="#111" stroke-width="1"/><path d="M10.5.8v3.6h3.6" fill="none" stroke="#111" stroke-width="1"/></svg></div>
<div id="tx77" class="t" style="left:283.60px;top:453.61px;font-size:11.800px;color:#fff;transform:scaleX(0.9592);transform-origin:0 0;">English</div>
<div id="tx78" class="t" style="left:466.60px;top:453.61px;font-size:11.800px;color:#fff;transform:scaleX(0.9871);transform-origin:0 0;">Portuguese</div>
<div id="tx79" class="t" style="left:648.60px;top:453.61px;font-size:11.800px;color:#fff;transform:scaleX(0.9729);transform-origin:0 0;">Translation</div>
<div id="tx80" class="t" style="left:1744.60px;top:453.61px;font-size:11.800px;color:#fff;transform:scaleX(0.9816);transform-origin:0 0;">Senhor Tradutor</div>
<div class="a" style="left:1px;top:476.4px;width:1918px;height:30.8px;background:#555555"></div>
<div class="a" style="left:38.6px;top:481.3px"><svg width="17" height="17" viewBox="0 0 17 17"><defs><linearGradient id="xg" x1="0" y1="0" x2="0" y2="1"><stop offset=".35" stop-color="#a3352b"/><stop offset=".36" stop-color="#911b10"/></linearGradient></defs><path d="M2 2l13 13M15 2L2 15" stroke="url(#xg)" stroke-width="5.2"/></svg></div>
<div class="a" style="left:129.2px;top:481.2px"><svg width="17" height="17" viewBox="0 0 17 17" style="overflow:visible"><g transform="rotate(45 8.5 8.5)"><rect x="-0.7" y="5.8" width="3.4" height="5.4" rx="1" fill="#f39a52"/><rect x="2.5" y="5.8" width="2.8" height="5.4" fill="#d4d4d4"/><rect x="5.3" y="5.8" width="9.2" height="1.9" fill="#e9c64c"/><rect x="5.3" y="7.7" width="9.2" height="1.7" fill="#f2ac62"/><rect x="5.3" y="9.4" width="9.2" height="1.8" fill="#f28a3c"/><path d="M14.5 5.8L17.9 8.5 14.5 11.2z" fill="#f4c9a2"/></g></svg></div>
<div class="a" style="left:222.5px;top:480.7px"><svg width="15" height="17" viewBox="0 0 15 17"><path d="M4.5.8h6l3.6 3.6v9.6H4.5z" fill="#fff" stroke="#111" stroke-width="1.2"/><path d="M.8 2.6h6.5l3 3v10.6H.8z" fill="#fff" stroke="#111" stroke-width="1.2"/><rect x="2.4" y="7" width="5.8" height="6.5" fill="#a6a6a6"/><path d="M7.3 2.6v3h3" fill="none" stroke="#111" stroke-width="1"/><path d="M10.5.8v3.6h3.6" fill="none" stroke="#111" stroke-width="1"/></svg></div>
<div id="tx81" class="t" style="left:283.60px;top:484.41px;font-size:11.800px;color:#fff;transform:scaleX(0.9592);transform-origin:0 0;">English</div>
<div id="tx82" class="t" style="left:466.60px;top:484.41px;font-size:11.800px;color:#fff;transform:scaleX(0.9871);transform-origin:0 0;">Portuguese</div>
<div id="tx83" class="t" style="left:648.60px;top:484.41px;font-size:11.800px;color:#fff;transform:scaleX(0.9729);transform-origin:0 0;">Translation</div>
<div id="tx84" class="t" style="left:1744.60px;top:484.41px;font-size:11.800px;color:#fff;transform:scaleX(0.9631);transform-origin:0 0;">Renato Barcelos</div>
<div class="a" style="left:1px;top:507.2px;width:1918px;height:30.8px;background:#4b4b4b"></div>
<div class="a" style="left:38.6px;top:512.1px"><svg width="17" height="17" viewBox="0 0 17 17"><defs><linearGradient id="xg" x1="0" y1="0" x2="0" y2="1"><stop offset=".35" stop-color="#a3352b"/><stop offset=".36" stop-color="#911b10"/></linearGradient></defs><path d="M2 2l13 13M15 2L2 15" stroke="url(#xg)" stroke-width="5.2"/></svg></div>
<div class="a" style="left:129.2px;top:512.0px"><svg width="17" height="17" viewBox="0 0 17 17" style="overflow:visible"><g transform="rotate(45 8.5 8.5)"><rect x="-0.7" y="5.8" width="3.4" height="5.4" rx="1" fill="#f39a52"/><rect x="2.5" y="5.8" width="2.8" height="5.4" fill="#d4d4d4"/><rect x="5.3" y="5.8" width="9.2" height="1.9" fill="#e9c64c"/><rect x="5.3" y="7.7" width="9.2" height="1.7" fill="#f2ac62"/><rect x="5.3" y="9.4" width="9.2" height="1.8" fill="#f28a3c"/><path d="M14.5 5.8L17.9 8.5 14.5 11.2z" fill="#f4c9a2"/></g></svg></div>
<div class="a" style="left:222.5px;top:511.5px"><svg width="15" height="17" viewBox="0 0 15 17"><path d="M4.5.8h6l3.6 3.6v9.6H4.5z" fill="#fff" stroke="#111" stroke-width="1.2"/><path d="M.8 2.6h6.5l3 3v10.6H.8z" fill="#fff" stroke="#111" stroke-width="1.2"/><rect x="2.4" y="7" width="5.8" height="6.5" fill="#a6a6a6"/><path d="M7.3 2.6v3h3" fill="none" stroke="#111" stroke-width="1"/><path d="M10.5.8v3.6h3.6" fill="none" stroke="#111" stroke-width="1"/></svg></div>
<div id="tx85" class="t" style="left:283.60px;top:515.21px;font-size:11.800px;color:#fff;transform:scaleX(0.9592);transform-origin:0 0;">English</div>
<div id="tx86" class="t" style="left:466.60px;top:515.21px;font-size:11.800px;color:#fff;transform:scaleX(0.9623);transform-origin:0 0;">Spanish</div>
<div id="tx87" class="t" style="left:648.60px;top:515.21px;font-size:11.800px;color:#fff;transform:scaleX(0.9729);transform-origin:0 0;">Translation</div>
<div id="tx88" class="t" style="left:1014.60px;top:515.21px;font-size:11.800px;color:#fff;transform:scaleX(1.0054);transform-origin:0 0;">Maya's consolidated account</div>
<div id="tx89" class="t" style="left:1196.60px;top:515.21px;font-size:11.800px;color:#fff;transform:scaleX(1.0053);transform-origin:0 0;">Maya Media Productions new</div>
<div id="tx90" class="t" style="left:1379.60px;top:515.21px;font-size:11.800px;color:#fff;transform:scaleX(0.9660);transform-origin:0 0;">666</div>
<div id="tx91" class="t" style="left:1562.60px;top:515.21px;font-size:11.800px;color:#fff;transform:scaleX(1.0064);transform-origin:0 0;">Todd's Production Team</div>
<div id="tx92" class="t" style="left:1744.60px;top:515.21px;font-size:11.800px;color:#fff;transform:scaleX(0.9387);transform-origin:0 0;">Basic Resource 3</div>
<div class="a" style="left:1px;top:538.0px;width:1918px;height:30.8px;background:#555555"></div>
<div class="a" style="left:38.6px;top:542.9px"><svg width="17" height="17" viewBox="0 0 17 17"><defs><linearGradient id="xg" x1="0" y1="0" x2="0" y2="1"><stop offset=".35" stop-color="#a3352b"/><stop offset=".36" stop-color="#911b10"/></linearGradient></defs><path d="M2 2l13 13M15 2L2 15" stroke="url(#xg)" stroke-width="5.2"/></svg></div>
<div class="a" style="left:129.2px;top:542.8px"><svg width="17" height="17" viewBox="0 0 17 17" style="overflow:visible"><g transform="rotate(45 8.5 8.5)"><rect x="-0.7" y="5.8" width="3.4" height="5.4" rx="1" fill="#f39a52"/><rect x="2.5" y="5.8" width="2.8" height="5.4" fill="#d4d4d4"/><rect x="5.3" y="5.8" width="9.2" height="1.9" fill="#e9c64c"/><rect x="5.3" y="7.7" width="9.2" height="1.7" fill="#f2ac62"/><rect x="5.3" y="9.4" width="9.2" height="1.8" fill="#f28a3c"/><path d="M14.5 5.8L17.9 8.5 14.5 11.2z" fill="#f4c9a2"/></g></svg></div>
<div class="a" style="left:222.5px;top:542.3px"><svg width="15" height="17" viewBox="0 0 15 17"><path d="M4.5.8h6l3.6 3.6v9.6H4.5z" fill="#fff" stroke="#111" stroke-width="1.2"/><path d="M.8 2.6h6.5l3 3v10.6H.8z" fill="#fff" stroke="#111" stroke-width="1.2"/><rect x="2.4" y="7" width="5.8" height="6.5" fill="#a6a6a6"/><path d="M7.3 2.6v3h3" fill="none" stroke="#111" stroke-width="1"/><path d="M10.5.8v3.6h3.6" fill="none" stroke="#111" stroke-width="1"/></svg></div>
<div id="tx93" class="t" style="left:283.60px;top:546.01px;font-size:11.800px;color:#fff;transform:scaleX(0.9592);transform-origin:0 0;">English</div>
<div id="tx94" class="t" style="left:466.60px;top:546.01px;font-size:11.800px;color:#fff;transform:scaleX(0.9623);transform-origin:0 0;">Spanish</div>
<div id="tx95" class="t" style="left:648.60px;top:546.01px;font-size:11.800px;color:#fff;transform:scaleX(0.9729);transform-origin:0 0;">Translation</div>
<div id="tx96" class="t" style="left:1014.60px;top:546.01px;font-size:11.800px;color:#fff;transform:scaleX(1.0054);transform-origin:0 0;">Maya's consolidated account</div>
<div id="tx97" class="t" style="left:1196.60px;top:546.01px;font-size:11.800px;color:#fff;transform:scaleX(1.0053);transform-origin:0 0;">Maya Media Productions new</div>
<div id="tx98" class="t" style="left:1379.60px;top:546.01px;font-size:11.800px;color:#fff;transform:scaleX(0.9660);transform-origin:0 0;">666</div>
<div id="tx99" class="t" style="left:1562.60px;top:546.01px;font-size:11.800px;color:#fff;transform:scaleX(1.0064);transform-origin:0 0;">Todd's Production Team</div>
<div id="tx100" class="t" style="left:1744.60px;top:546.01px;font-size:11.800px;color:#fff;transform:scaleX(0.9478);transform-origin:0 0;">Maya</div>
<div class="vl" style="left:92px;top:230px;height:338.8px;background:#2a2a2a"></div>
<div class="vl" style="left:184px;top:230px;height:338.8px;background:#2a2a2a"></div>
<div class="vl" style="left:275px;top:230px;height:338.8px;background:#2a2a2a"></div>
<div class="vl" style="left:458px;top:230px;height:338.8px;background:#2a2a2a"></div>
<div class="vl" style="left:640px;top:230px;height:338.8px;background:#2a2a2a"></div>
<div class="vl" style="left:823px;top:230px;height:338.8px;background:#2a2a2a"></div>
<div class="vl" style="left:1006px;top:230px;height:338.8px;background:#2a2a2a"></div>
<div class="vl" style="left:1188px;top:230px;height:338.8px;background:#2a2a2a"></div>
<div class="vl" style="left:1371px;top:230px;height:338.8px;background:#2a2a2a"></div>
<div class="vl" style="left:1554px;top:230px;height:338.8px;background:#2a2a2a"></div>
<div class="vl" style="left:1736px;top:230px;height:338.8px;background:#2a2a2a"></div>
<div class="gr" style="left:91px;top:191px;width:38px;height:38px"></div>
<div class="gr" style="left:274px;top:190px;width:1283px;height:47px"></div>
<div class="gr" style="left:1557px;top:190px;width:364px;height:47px"></div>
<div class="circ" style="left:423px;top:150.5px">5</div>
<div class="circ" style="left:1706px;top:156.5px">6</div>
<div class="circ" style="left:93px;top:156.5px">7</div>
<div class="a" style="left:1px;top:771px;width:1918px;height:37px;background:linear-gradient(#323131 0,#383737 3px,#424040 17px,#353434 17.5px,#272626 30.5px,#292828 37px)"></div>
<svg class="a" style="left:7px;top:777px" width="16" height="16" viewBox="0 0 16 16"><circle cx="8" cy="8" r="8" fill="#7ab13a"/><path d="M8 3.5v9M3.5 8h9" stroke="#fff" stroke-width="2.6"/></svg>
<div id="tx101" class="t" style="left:29.70px;top:780.91px;font-size:11.800px;color:#fff;transform:scaleX(1.0224);transform-origin:0 0;">Add automatic assignment</div>
<div class="a" style="left:1px;top:808px;width:1918px;height:34px;background:linear-gradient(#2d2c2c 0,#393838 4px,#434141 17px,#353434 17.5px,#272626 29px,#292828 34px)"></div>
<div class="pb" style="left:5.5px;top:813px"></div>
<div class="pb" style="left:33.5px;top:813px"></div>
<div class="pb" style="left:205px;top:813px"></div>
<div class="pb" style="left:233.5px;top:813px"></div>
<svg class="a" style="left:12px;top:820px" width="11" height="11" viewBox="0 0 11 11"><rect x="1" y="1" width="2" height="9" fill="#9c9c9c"/><path d="M10 1v9L3.5 5.5z" fill="#9c9c9c"/></svg>
<svg class="a" style="left:41px;top:820px" width="11" height="11" viewBox="0 0 11 11"><path d="M8 1v9L2 5.5z" fill="#9c9c9c"/></svg>
<svg class="a" style="left:212px;top:820px" width="11" height="11" viewBox="0 0 11 11"><path d="M3 1v9l6-4.5z" fill="#9c9c9c"/></svg>
<svg class="a" style="left:240px;top:820px" width="11" height="11" viewBox="0 0 11 11"><path d="M1 1v9l6.5-4.5z" fill="#9c9c9c"/><rect x="8" y="1" width="2" height="9" fill="#9c9c9c"/></svg>
<div class="a" style="left:61px;top:813px;width:26px;height:25px;border-radius:50%;background:#3a6dc8;color:#fff;text-align:center;line-height:25px;font-size:12px">1</div>
<div id="tx102" class="t" style="left:99.40px;top:817.61px;font-size:11.800px;color:#fff;transform:scaleX(0.9144);transform-origin:0 0;">Page</div>
<div class="a" style="left:131px;top:813px;width:34px;height:24px;border-radius:4px;background:#fff;color:#2a2a2a;line-height:24px;padding-left:7.5px;font-size:12px">1</div>
<div id="tx103" class="t" style="left:172.40px;top:817.61px;font-size:11.800px;color:#fff;transform:scaleX(1.0052);transform-origin:0 0;">of 1</div>
<div class="dd" style="left:272px;top:813px;width:58px"><div class="w" style="width:34px;padding-left:7px">20</div><div class="b"><i></i></div></div>
<div id="tx104" class="t" style="left:337.10px;top:816.91px;font-size:11.800px;color:#fff;transform:scaleX(1.0115);transform-origin:0 0;">items per page</div>
<div id="tx105" class="t" style="left:1733.10px;top:817.91px;font-size:11.800px;color:#fff;transform:scaleX(1.0097);transform-origin:0 0;">1 - 12 of 12 items</div>
<div class="pb" style="left:1837px;top:812.5px"></div>
<div class="pb" style="left:1863.5px;top:812.5px"></div>
<div class="pb" style="left:1889.5px;top:812.5px"></div>
<svg class="a" style="left:1840px;top:816px" width="20" height="18" viewBox="0 0 20 18"><path d="M10 2v14" stroke="#fff" stroke-width="1.6"/><path d="M2 9h6M12 9h6" stroke="#fff" stroke-width="1.4"/><path d="M1.5 9l3-3v6zM18.5 9l-3-3v6z" fill="#fff"/></svg>
<svg class="a" style="left:1867px;top:816px" width="20" height="18" viewBox="0 0 20 18"><path d="M2 3l6 6v7" fill="none" stroke="#fff" stroke-width="1.6"/><path d="M14 3l-6 6" stroke="#fff" stroke-width="1.6"/><path d="M8 1.5l9 9" stroke="#fff" stroke-width="1.6"/></svg>
<svg class="a" style="left:1892px;top:816px" width="20" height="18" viewBox="0 0 20 18"><path d="M14.6 5.2A6 6 0 1 0 16 9.5" fill="none" stroke="#fff" stroke-width="1.9"/><path d="M11.8 2.2l5.2.2-.6 5.2z" fill="#fff"/></svg>
<div class="a" style="left:1920px;top:0;width:1px;height:911px;background:#c4c4c4"></div>
<svg class="a" style="left:520px;top:688px" width="14" height="21" viewBox="0 0 14 21"><path d="M0.8 1.2V17.2L4.6 13.8 7.2 19.4 9.2 18.5 6.9 13.1H11.4Z" fill="#fff" stroke="#000" stroke-width="1.1" stroke-linejoin="round"/></svg>
<div id="tx106" class="t" style="left:837.30px;top:897.07px;font-size:10.200px;color:#fff;transform:scaleX(0.9834);transform-origin:0 0;">Copyright © 2012 <span style="font-style:italic;color:#8b8b8e;letter-spacing:-2px">O</span><span style="font-style:italic;color:#f2c43f;letter-spacing:-2px">O</span><span style="font-style:italic;color:#5ab9e3">O</span><span style="color:#8b8b8e">NA.NET</span> ltd. All rights reserved.</div>
</body></html>
